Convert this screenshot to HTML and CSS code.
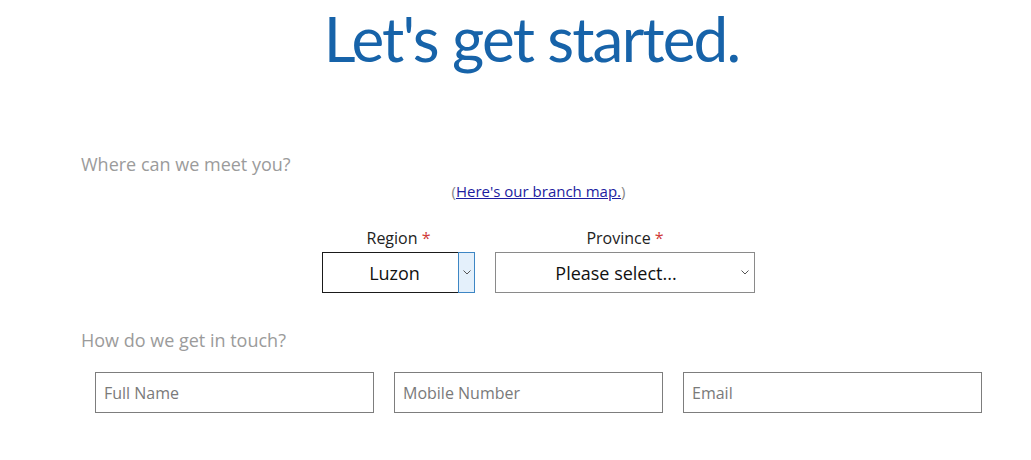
FILE: index.html
```html
<!DOCTYPE html>
<html>
<head>
<meta charset="utf-8">
<link rel="stylesheet" href="styles.css">
</head>
<body>
<div class="page">
  <h1 class="title">Let's get started.</h1>
  <h2 class="section-label meet">Where can we meet you?</h2>
  <p class="map-note">(<a href="#">Here's our branch map.</a>)</p>
  <div class="select-row">
    <div class="field region">
      <label class="field-label">Region <span class="req">*</span></label>
      <div class="select-wrap focused">
        <select class="select"><option>Luzon</option></select>
        <span class="arrow"><svg width="8" height="5" viewBox="0 0 8 5"><path d="M0.5 0.5 L4 4 L7.5 0.5" fill="none" stroke="#555" stroke-width="1"/></svg></span>
      </div>
    </div>
    <div class="field province">
      <label class="field-label">Province <span class="req">*</span></label>
      <div class="select-wrap">
        <select class="select"><option>Please select...</option></select>
        <span class="arrow"><svg width="8" height="5" viewBox="0 0 8 5"><path d="M0.5 0.5 L4 4 L7.5 0.5" fill="none" stroke="#555" stroke-width="1"/></svg></span>
      </div>
    </div>
  </div>
  <h2 class="section-label touch">How do we get in touch?</h2>
  <div class="input-row">
    <input class="text-input" placeholder="Full Name">
    <input class="text-input" placeholder="Mobile Number">
    <input class="text-input" placeholder="Email">
  </div>
</div>
</body>
</html>
```
FILE: styles.css
```css
* { box-sizing: border-box; }
html, body { margin: 0; padding: 0; background: #fff; }
body { font-family: "Open Sans", "Liberation Sans", sans-serif; color: #222; }
.page { width: 915px; margin-left: 81px; }
.title {
  margin: 0;
  text-align: center;
  font-family: Lato, "Open Sans", sans-serif;
  font-weight: 400;
  font-size: 62px;
  line-height: 76px;
  height: 80px;
  letter-spacing: -1.8px;
  color: #1763a9;
  padding-right: 14px;
}
.section-label {
  margin: 0;
  font-weight: 400;
  font-size: 18px;
  line-height: 24px;
  color: #9b9b9b;
}
.meet { margin-top: 72px; }
.map-note {
  margin: 5px 0 0;
  text-align: center;
  font-size: 15px;
  line-height: 20px;
  color: #888;
}
.map-note a { color: #1d1ca0; text-decoration: underline; }
.select-row {
  display: flex;
  justify-content: center;
  gap: 20px;
  margin-top: 26px;
}
.field { display: flex; flex-direction: column; align-items: center; }
.region { width: 153px; }
.province { width: 260px; }
.field-label { font-size: 16px; line-height: 22px; color: #222; margin-bottom: 3px; }
.req { color: #d03a3a; }
.select-wrap { position: relative; width: 100%; height: 41px; }
.select {
  appearance: none;
  -webkit-appearance: none;
  width: 100%;
  height: 41px;
  border: 1px solid #8a8a8a;
  background: #fff;
  font-family: "Open Sans", "Liberation Sans", sans-serif;
  font-size: 18px;
  color: #111;
  text-align: center;
  text-align-last: center;
  padding: 0 18px 0 0;
  border-radius: 0;
}
.focused .select { border-color: #1a1a1a; padding-right: 8px; }
.arrow {
  position: absolute;
  top: 0; right: 0;
  width: 17px; height: 41px;
  display: flex; align-items: center; justify-content: center;
}
.focused .arrow {
  background: #e4f0fb;
  border: 1px solid #3d86c4;
}
.province .arrow { right: 2px; }
.touch { margin-top: 35px; }
.input-row {
  display: grid;
  grid-template-columns: 279px 269px 299px;
  gap: 20px;
  margin-top: 20px;
  margin-left: 14px;
}
.text-input {
  height: 41px;
  border: 1px solid #7d7d7d;
  padding: 0 8px;
  font-family: "Open Sans", "Liberation Sans", sans-serif;
  font-size: 16px;
  color: #333;
  border-radius: 0;
  outline: none;
}
.text-input::placeholder { color: #7a7a7a; }
```
